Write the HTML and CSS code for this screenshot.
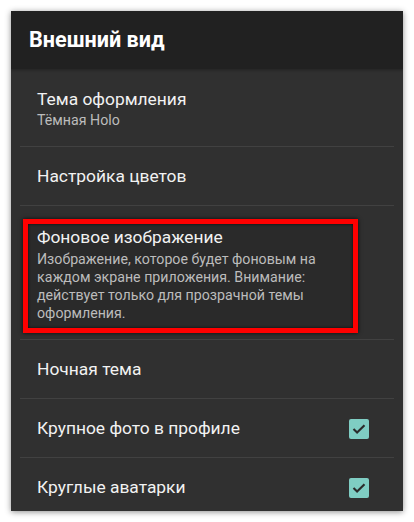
FILE: index.html
```html
<!DOCTYPE html>
<html lang="ru">
<head>
  <meta charset="UTF-8">
  <meta name="viewport" content="width=device-width, initial-scale=1.0">
  <title>Внешний вид</title>
  <link rel="stylesheet" href="styles.css">
</head>
<body>
  <div class="phone">
    <header class="toolbar">
      <h1>Внешний вид</h1>
    </header>
    <div class="prefs">
      <div class="pref pref-two">
        <div class="pref-title">Тема оформления</div>
        <div class="pref-summary">Тёмная Holo</div>
      </div>
      <div class="pref">
        <div class="pref-title">Настройка цветов</div>
      </div>
      <div class="pref pref-marked">
        <div class="mark">
          <div class="pref-title">Фоновое изображение</div>
          <div class="pref-summary">Изображение, которое будет фоновым на каждом экране приложения. Внимание: действует только для прозрачной темы оформления.</div>
        </div>
      </div>
      <div class="pref">
        <div class="pref-title">Ночная тема</div>
      </div>
      <div class="pref">
        <div class="pref-title">Крупное фото в профиле</div>
        <span class="check">
          <svg viewBox="0 0 20 20" width="20" height="20"><path d="M4.5 10l3.6 3.6 7.4-7.4" fill="none" stroke="#2b2b2b" stroke-width="2.1"/></svg>
        </span>
      </div>
      <div class="pref">
        <div class="pref-title">Круглые аватарки</div>
        <span class="check">
          <svg viewBox="0 0 20 20" width="20" height="20"><path d="M4.5 10l3.6 3.6 7.4-7.4" fill="none" stroke="#2b2b2b" stroke-width="2.1"/></svg>
        </span>
      </div>
    </div>
  </div>
</body>
</html>
```

FILE: styles.css
```css
* { margin: 0; padding: 0; box-sizing: border-box; }
body {
  background: #fff;
  font-family: Roboto, "Noto Sans", sans-serif;
}
.phone {
  margin: 11px;
  width: 392px;
  height: 500px;
  overflow: hidden;
  background: #303030;
  box-shadow: 0 1px 6px rgba(0,0,0,0.45);
}
.toolbar {
  height: 58px;
  background: #212121;
  display: flex;
  align-items: center;
  padding-left: 18px;
  box-shadow: 0 1px 3px rgba(0,0,0,0.3);
  position: relative;
}
.toolbar h1 {
  font-size: 21.6px;
  font-weight: 700;
  color: #fff;
  margin-top: -2px;
}
.prefs {
  padding: 0 9px;
}
.pref {
  height: 59px;
  border-bottom: 1px solid #414141;
  display: flex;
  align-items: center;
  justify-content: space-between;
  padding: 0 25px 0 17px;
}
.pref-two {
  height: 78px;
  flex-direction: column;
  align-items: flex-start;
  justify-content: center;
  padding-top: 2px;
}
.pref-title {
  font-size: 17.4px;
  color: #f2f2f2;
  line-height: 21px;
}
.pref-summary {
  font-size: 14.2px;
  color: #bcbcbc;
  line-height: 18px;
  margin-top: 1px;
}
/* red frame around the wallpaper option */
.pref-marked {
  height: 134px;
  align-items: flex-start;
  padding: 13px 0 0 3px;
}
.mark {
  width: 335px;
  height: 114px;
  border: 5px solid #ff0000;
  background: #2a2a2a;
  padding: 3px 6px 0 9px;
  box-shadow: 0 0 4px rgba(0,0,0,0.8), inset 0 0 3px rgba(0,0,0,0.8);
}
.mark .pref-summary {
  margin-top: 2px;
}
.check {
  width: 20px;
  height: 20px;
  border-radius: 2px;
  background: #7fcdc3;
  display: flex;
  margin-top: 1px;
}
```
